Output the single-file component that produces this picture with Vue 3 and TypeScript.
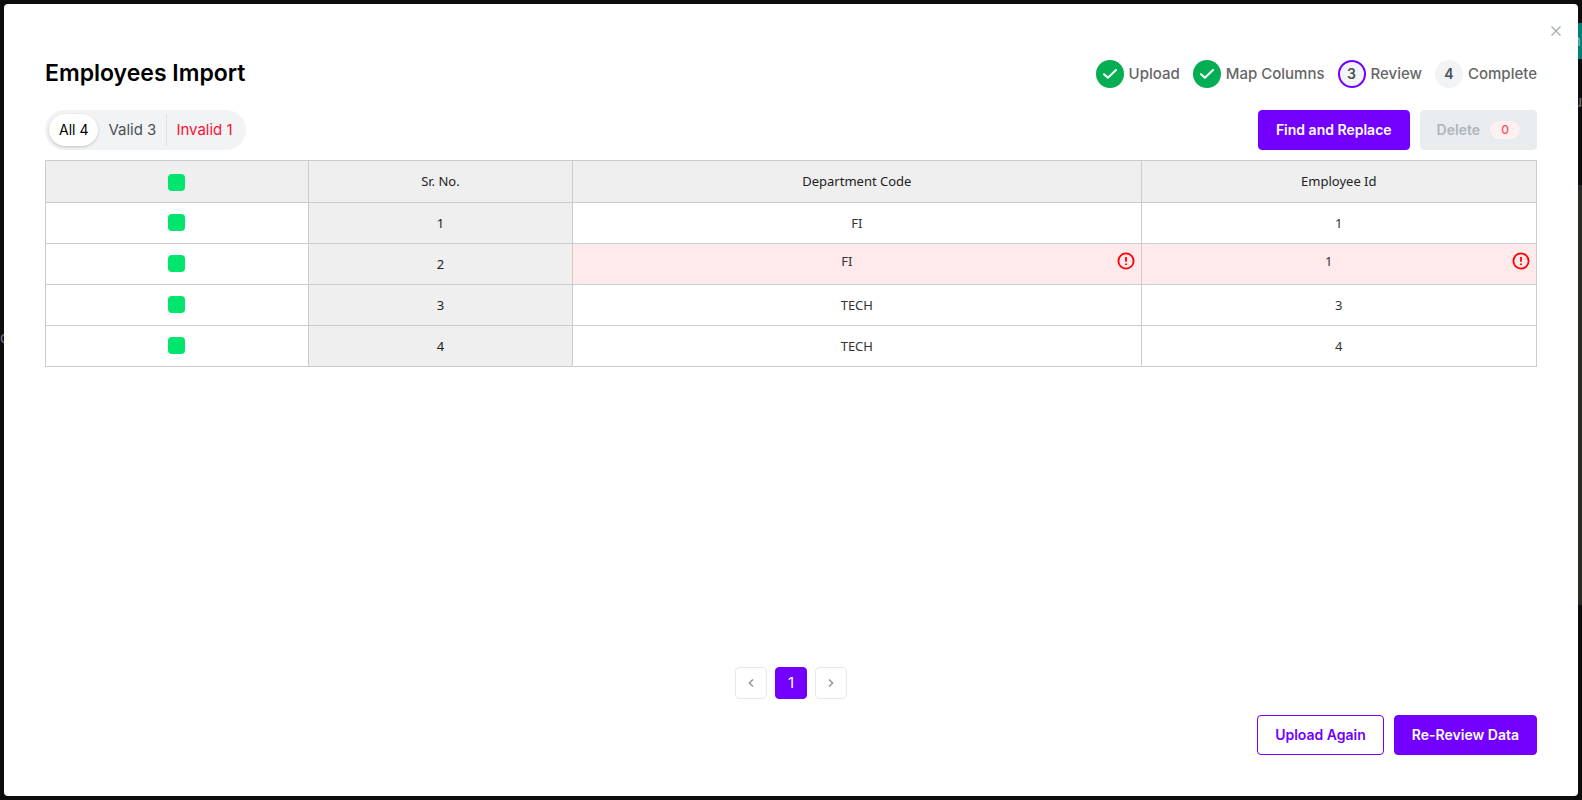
<script setup lang="ts">
import { ref } from 'vue'

interface Step { id: number; label: string; state: 'done' | 'current' | 'todo' }
interface Row { id: number; department: string; employee: string; invalid: boolean }

const steps: Step[] = [
  { id: 1, label: 'Upload', state: 'done' },
  { id: 2, label: 'Map Columns', state: 'done' },
  { id: 3, label: 'Review', state: 'current' },
  { id: 4, label: 'Complete', state: 'todo' },
]

const rows: Row[] = [
  { id: 1, department: 'FI', employee: '1', invalid: false },
  { id: 2, department: 'FI', employee: '1', invalid: true },
  { id: 3, department: 'TECH', employee: '3', invalid: false },
  { id: 4, department: 'TECH', employee: '4', invalid: false },
]

const tabs = [
  { key: 'all', label: 'All 4' },
  { key: 'valid', label: 'Valid 3' },
  { key: 'invalid', label: 'Invalid 1' },
]
const active = ref('all')
</script>

<template>
  <div class="overlay">
    <div class="behind" aria-hidden="true">
      <div class="behind-button">n</div>
      <div class="behind-user">u</div>
      <div class="behind-panel"></div>
      <div class="behind-left">c</div>
    </div>

    <main class="modal" role="dialog" aria-labelledby="title">
      <button class="close" type="button" aria-label="Close">
        <svg viewBox="0 0 10 10" width="10" height="10"><path d="M.5.5l9 9M9.5.5l-9 9" /></svg>
      </button>

      <header class="head">
        <h1 id="title">Employees Import</h1>
        <ol class="steps">
          <li v-for="s in steps" :key="s.id" class="step">
            <span class="dot" :class="s.state">
              <svg v-if="s.state === 'done'" viewBox="0 0 14 10" width="14" height="10"><path d="M1 5.2l3.9 3.6L13 1" /></svg>
              <template v-else>{{ s.id }}</template>
            </span>
            <span>{{ s.label }}</span>
          </li>
        </ol>
      </header>

      <div class="toolbar">
        <div class="tabs">
          <button
            v-for="t in tabs"
            :key="t.key"
            type="button"
            class="tab"
            :class="[t.key, { active: active === t.key }]"
            @click="active = t.key"
          >{{ t.label }}</button>
        </div>
        <div class="actions">
          <button class="btn primary" type="button">Find and Replace</button>
          <button class="btn muted" type="button" disabled>Delete <span class="count">0</span></button>
        </div>
      </div>

      <table class="grid">
        <colgroup>
          <col class="c-select" /><col class="c-serial" /><col class="c-dept" /><col />
        </colgroup>
        <thead>
          <tr>
            <th><input type="checkbox" aria-label="Select all rows" /></th>
            <th>Sr. No.</th>
            <th>Department Code</th>
            <th>Employee Id</th>
          </tr>
        </thead>
        <tbody>
          <tr v-for="r in rows" :key="r.id" :class="{ invalid: r.invalid }">
            <td class="select"><input type="checkbox" :aria-label="`Select row ${r.id}`" /></td>
            <td class="serial">{{ r.id }}</td>
            <td v-for="(v, i) in [r.department, r.employee]" :key="i" class="value">
              <div v-if="r.invalid" class="error">
                <span>{{ v }}</span>
                <svg viewBox="0 0 20 20" width="20" height="20" role="img" aria-label="Invalid value">
                  <circle cx="10" cy="10" r="7.6" />
                  <path d="M10 6v4.8M10 12.4v1.6" />
                </svg>
              </div>
              <template v-else>{{ v }}</template>
            </td>
          </tr>
        </tbody>
      </table>

      <nav class="pager" aria-label="Pages">
        <button type="button" aria-label="Previous page">
          <svg viewBox="0 0 6 8" width="6" height="8"><path d="M5 .5L1.4 4 5 7.5" /></svg>
        </button>
        <button type="button" class="on" aria-current="page">1</button>
        <button type="button" aria-label="Next page">
          <svg viewBox="0 0 6 8" width="6" height="8"><path d="M1 .5L4.6 4 1 7.5" /></svg>
        </button>
      </nav>

      <footer class="foot">
        <button class="btn outline" type="button">Upload Again</button>
        <button class="btn primary" type="button">Re-Review Data</button>
      </footer>
    </main>
  </div>
</template>

<style>
body { margin: 0; }
</style>

<style scoped>
* { box-sizing: border-box; }
button { font: inherit; margin: 0; cursor: pointer; }
svg { fill: none; display: block; }

.overlay {
  position: relative;
  display: flex;
  min-height: 100vh;
  padding: 4px;
  background: #0d0d10;
  font: 15px/20px Inter, "Open Sans", sans-serif;
}
.behind { position: absolute; inset: 0; overflow: hidden; color: #777; }
.behind-button { position: absolute; right: 0; top: 23px; width: 10px; height: 36px; line-height: 36px; background: #007d7d; color: #8cb5b5; }
.behind-user { position: absolute; right: 0; top: 92px; }
.behind-panel { position: absolute; right: 0; top: 185px; width: 10px; height: 420px; background: #282b25; }
.behind-left { position: absolute; left: 0; top: 328px; }

.modal {
  position: relative;
  flex: 1;
  display: flex;
  flex-direction: column;
  padding: 52px 41px 41px;
  background: #fff;
  border-radius: 4px;
}
.close {
  position: absolute;
  top: 16px;
  right: 11px;
  padding: 6px;
  border: 0;
  background: none;
}
.close svg { stroke: #a3abb4; stroke-width: 1.2; }

.head { display: flex; justify-content: space-between; align-items: center; height: 36px; }
h1 { margin: 0; font-size: 23px; line-height: 34px; padding-bottom: 2px; font-weight: 600; color: #000; }
.steps { display: flex; gap: 13px; margin: 0; padding: 0; list-style: none; font-weight: 500; color: #666; }
.step { display: flex; align-items: center; gap: 5px; }
.dot {
  display: flex;
  align-items: center;
  justify-content: center;
  width: 28px;
  height: 28px;
  border-radius: 50%;
  background: #f1f3f5;
  color: #495057;
  font-size: 14px;
  font-weight: 600;
}
.dot.done { background: #05ad53; }
.dot.done svg { stroke: #fff; stroke-width: 2; stroke-linecap: round; stroke-linejoin: round; }
.dot.current { border: 2px solid #7300ff; }

.toolbar { display: flex; justify-content: space-between; margin-top: 18px; }
.tabs { display: flex; padding: 4px; border-radius: 20px; background: #f1f3f5; }
.tab { height: 32px; padding: 0 10px; border: 0; border-radius: 16px; background: none; color: #495057; }
.tab.active { background: #fff; color: #000; font-size: 14px; box-shadow: 0 1px 3px rgba(0, 0, 0, 0.2); }
.tab.invalid { padding: 0 9px; border-left: 1px solid #dee2e6; border-radius: 0; color: #fa1136; }

.actions, .foot { display: flex; gap: 10px; }
.btn {
  display: flex;
  align-items: center;
  gap: 10px;
  height: 40px;
  padding: 0 17px;
  border: 1px solid #7300ff;
  border-radius: 4px;
  font-size: 14px;
  font-weight: 600;
  white-space: nowrap;
}
.primary { background: #7300ff; color: #fff; }
.outline { background: #fff; color: #7300ff; }
.muted { padding: 0 16px; border-color: #e9ecef; background: #e9ecef; color: #adb5bd; }
.count { width: 30px; height: 18px; border-radius: 9px; background: #fff1f2; color: #ff4d5e; font-size: 12px; font-weight: 500; line-height: 18px; }

.grid {
  width: 100%;
  margin-top: 10px;
  border-collapse: collapse;
  table-layout: fixed;
  font: 13px/20px "Noto Sans", "Open Sans", sans-serif;
  color: #333;
  text-align: center;
}
.c-select { width: 17.63%; }
.c-serial { width: 17.72%; }
.c-dept { width: 38.13%; }
th, td { height: 41px; padding: 0; border: 1px solid #ccc; font-weight: 400; }
th { height: 42px; padding-bottom: 2px; background: #efefef; color: #222; }
th:first-child { padding: 2px 0 0; }
.select { padding-bottom: 2px; }
.serial { background: #efefef; color: #222; }
.invalid .value { background: #ffe9ea; }
.error { display: flex; align-items: center; padding: 0 5px 6px; }
.error span { flex: 1; }
.error svg { stroke: #f00; stroke-width: 1.8; }
input {
  appearance: none;
  display: block;
  width: 17px;
  height: 17px;
  margin: 0 auto;
  border-radius: 4px;
  background: #00e56b;
}

.pager { display: flex; justify-content: center; gap: 8px; margin-top: auto; }
.pager button {
  display: flex;
  align-items: center;
  justify-content: center;
  width: 32px;
  height: 32px;
  padding: 0;
  border: 1px solid #e9e9e9;
  border-radius: 4px;
  background: #fff;
}
.pager svg { stroke: #999; stroke-width: 1.6; }
.pager .on { border-color: #7300ff; background: #7300ff; color: #fff; }
.foot { justify-content: flex-end; margin-top: 16px; }
</style>
